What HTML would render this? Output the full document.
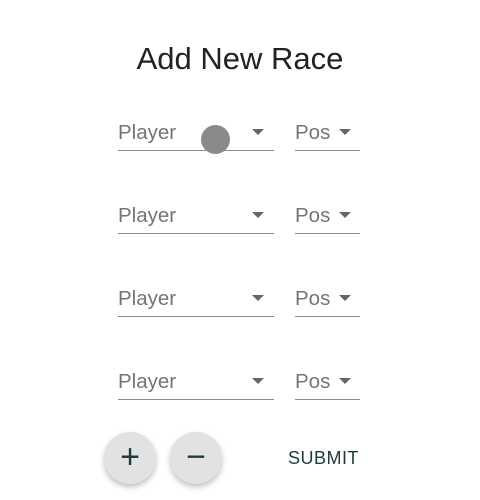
<!DOCTYPE html><html><head><style>
body{margin:0;width:480px;height:500px;background:#fff;font-family:"Liberation Sans",sans-serif;position:relative;overflow:hidden}
h1{position:absolute;top:41px;left:0;width:480px;text-align:center;margin:0;font-weight:400;font-size:31px;color:#222}
.f{position:absolute;height:30px;border-bottom:1.5px solid #8c8c8c;color:#757575;font-size:20.5px}
.f span{position:absolute;left:0px;top:1px}
.a{position:absolute;top:9px;width:0;height:0;border-left:6px solid transparent;border-right:6px solid transparent;border-top:6px solid #666}
.b{position:absolute;width:52px;height:52px;border-radius:50%;background:#e2e2e2;box-shadow:0 3px 6px rgba(0,0,0,.25);color:#1d3b3b;font-size:34px;text-align:center;line-height:50px}
</style></head><body>
<h1>Add New Race</h1>
<div class="f" style="left:118px;top:120px;width:156px"><span>Player</span><i class="a" style="left:134px"></i></div>
<div class="f" style="left:295px;top:120px;width:65px"><span>Pos</span><i class="a" style="left:44px"></i></div>
<div class="f" style="left:118px;top:203px;width:156px"><span>Player</span><i class="a" style="left:134px"></i></div>
<div class="f" style="left:295px;top:203px;width:65px"><span>Pos</span><i class="a" style="left:44px"></i></div>
<div class="f" style="left:118px;top:286px;width:156px"><span>Player</span><i class="a" style="left:134px"></i></div>
<div class="f" style="left:295px;top:286px;width:65px"><span>Pos</span><i class="a" style="left:44px"></i></div>
<div class="f" style="left:118px;top:369px;width:156px"><span>Player</span><i class="a" style="left:134px"></i></div>
<div class="f" style="left:295px;top:369px;width:65px"><span>Pos</span><i class="a" style="left:44px"></i></div>
<div style="position:absolute;left:201px;top:125px;width:29px;height:29px;border-radius:50%;background:#8a898c"></div>
<div class="b" style="left:104px;top:432px">+</div>
<div class="b" style="left:170px;top:432px">−</div>
<div style="position:absolute;left:288px;top:448px;font-size:18px;color:#1d3b3b;letter-spacing:.5px">SUBMIT</div>
</body></html>
